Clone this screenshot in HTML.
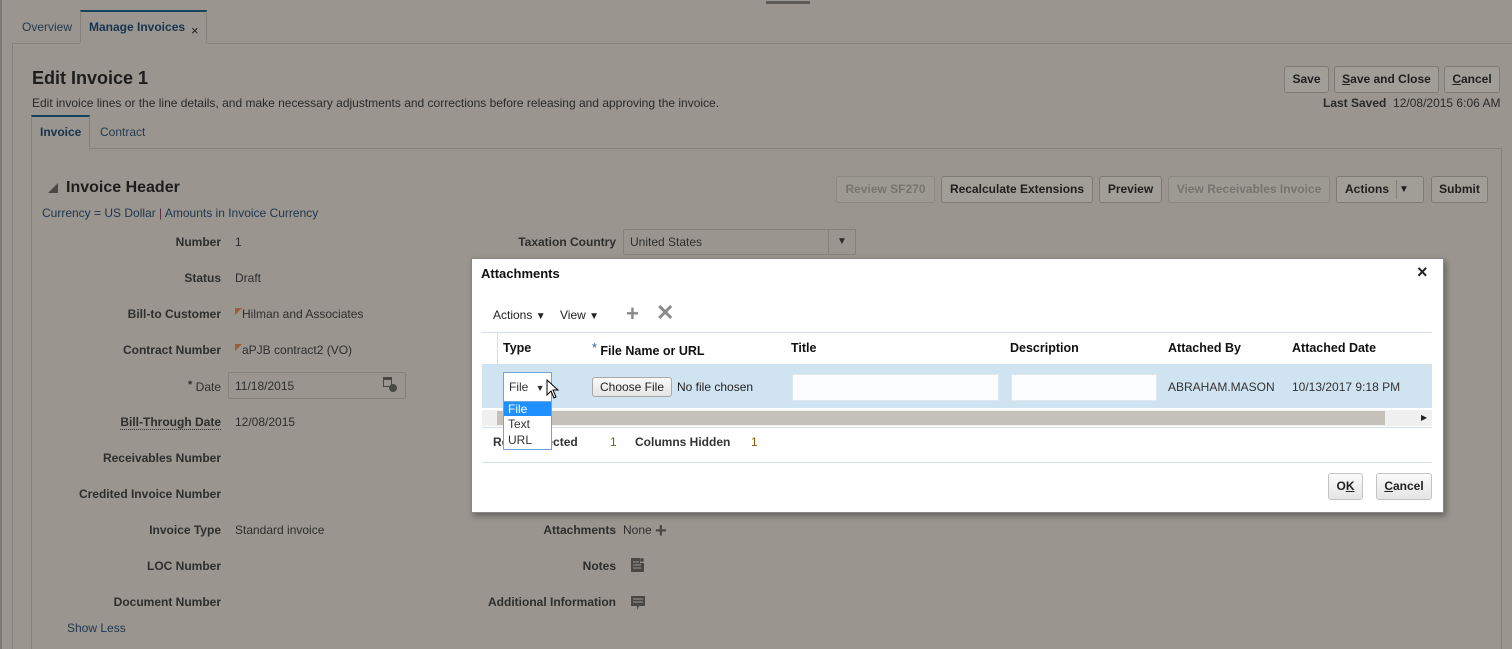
<!DOCTYPE html>
<html style="overflow:hidden;height:649px"><head><meta charset="utf-8"><style>
*{box-sizing:border-box;margin:0;padding:0}
body{width:1512px;height:649px;overflow:hidden;background:#9a968f;font-family:"Liberation Sans",Arial,sans-serif;font-size:12px;color:#2a2a2a;position:relative}
.a{position:absolute;white-space:nowrap}
.lbl{position:absolute;text-align:right;font-weight:bold;color:#2e2e2e;font-size:12px;white-space:nowrap}
.val{position:absolute;color:#2e2e2e;font-size:12px;white-space:nowrap}
.btn{position:absolute;height:27px;border:1px solid #7e7b75;border-radius:3px;background:#a19e97;font-weight:bold;font-size:12px;color:#1f1f1f;text-align:center;line-height:25px}
.dis{color:#77746e;border-color:#8c8983;background:#9d9a93}
.th{position:absolute;top:341px;font-weight:bold;font-size:12.5px;color:#111}
.wb{position:absolute;height:27px;border:1px solid #c4c4c4;border-radius:3px;background:linear-gradient(#fafafa,#e4e4e4);font-size:12px;color:#222;text-align:center;line-height:25px}
</style></head><body>
<div class="a" style="left:766px;top:1px;width:44px;height:3px;background:#5e5c58"></div>
<div class="a" style="left:0;top:0;width:2px;height:649px;background:#7d7b78"></div>
<div class="a" style="left:22px;top:20px;color:#243a52">Overview</div>
<div class="a" style="left:80px;top:10px;width:127px;height:34px;border:1px solid #85827c;border-bottom:none;border-top:2px solid #15425f;background:#9a968f"></div>
<div class="a" style="left:89px;top:20px;font-weight:bold;color:#17344f">Manage Invoices</div>
<div class="a" style="left:191px;top:23px;font-size:13px;color:#222">×</div>
<div class="a" style="left:12px;top:43px;width:1500px;height:606px;border:1px solid #85827c;border-right:none;border-bottom:none"></div>
<div class="a" style="left:80px;top:43px;width:127px;height:2px;background:#9a968f"></div>
<div class="a" style="left:32px;top:68px;font-size:18px;font-weight:bold;color:#1d1d1d">Edit Invoice 1</div>
<div class="a" style="left:32px;top:96px;color:#2a2a2a">Edit invoice lines or the line details, and make necessary adjustments and corrections before releasing and approving the invoice.</div>
<div class="btn" style="left:1284px;top:66px;width:45px">Save</div>
<div class="btn" style="left:1334px;top:66px;width:105px"><u>S</u>ave and Close</div>
<div class="btn" style="left:1444px;top:66px;width:56px"><u>C</u>ancel</div>
<div class="a" style="left:1323px;top:96px"><b>Last Saved</b>&nbsp; 12/08/2015 6:06 AM</div>
<div class="a" style="left:31px;top:148px;width:1471px;height:501px;border:1px solid #85827c;border-bottom:none"></div>
<div class="a" style="left:31px;top:115px;width:59px;height:35px;border:1px solid #85827c;border-bottom:none;border-top:2px solid #15425f;background:#9a968f"></div>
<div class="a" style="left:40px;top:125px;font-weight:bold;color:#17344f">Invoice</div>
<div class="a" style="left:100px;top:125px;color:#243a52">Contract</div>
<div class="a" style="left:48px;top:183px;width:0;height:0;border-left:10px solid transparent;border-bottom:10px solid #4a4844"></div>
<div class="a" style="left:66px;top:179px;font-size:16px;font-weight:bold;color:#1d1d1d">Invoice Header</div>
<div class="a" style="left:42px;top:206px;color:#1f3550">Currency = US Dollar <span style="color:#5a2850">|</span> Amounts in Invoice Currency</div>
<div class="btn dis" style="left:836px;top:176px;width:99px">Review SF270</div>
<div class="btn" style="left:941px;top:176px;width:152px">Recalculate Extensions</div>
<div class="btn" style="left:1099px;top:176px;width:63px">Preview</div>
<div class="btn dis" style="left:1168px;top:176px;width:162px">View Receivables Invoice</div>
<div class="btn" style="left:1336px;top:176px;width:88px;text-align:left;padding-left:8px">Actions<span style="position:absolute;left:59px;top:3px;height:19px;border-left:1px solid #85827c"></span><span style="position:absolute;left:62px;font-size:10px">▼</span></div>
<div class="btn" style="left:1431px;top:176px;width:57px">Submit</div>
<div class="lbl" style="right:1291px;top:235px">Number</div><div class="val" style="left:235px;top:235px">1</div>
<div class="lbl" style="right:1291px;top:271px">Status</div><div class="val" style="left:235px;top:271px">Draft</div>
<div class="lbl" style="right:1291px;top:307px">Bill-to Customer</div><div class="val" style="left:235px;top:307px"><span style="display:inline-block;width:0;height:0;border-top:7px solid #9a5e3e;border-right:7px solid transparent;vertical-align:top;margin-top:1px"></span>Hilman and Associates</div>
<div class="lbl" style="right:1291px;top:343px">Contract Number</div><div class="val" style="left:235px;top:343px"><span style="display:inline-block;width:0;height:0;border-top:7px solid #9a5e3e;border-right:7px solid transparent;vertical-align:top;margin-top:1px"></span>aPJB contract2 (VO)</div>
<div class="lbl" style="right:1291px;top:379px;font-weight:normal"><b style="vertical-align:3px;font-size:11px">*</b> Date</div>
<div class="a" style="left:228px;top:372px;width:178px;height:27px;border:1px solid #85827c;border-radius:2px"></div>
<div class="val" style="left:235px;top:379px">11/18/2015</div>
<div class="a" style="left:383px;top:377px;width:9px;height:10px;border:1.5px solid #4a4844;border-top-width:3px"></div><div class="a" style="left:389px;top:384px;width:8px;height:8px;border-radius:50%;background:#4a4844"></div>
<div class="lbl" style="right:1291px;top:415px;border-bottom:1px dotted #333">Bill-Through Date</div><div class="val" style="left:235px;top:415px">12/08/2015</div>
<div class="lbl" style="right:1291px;top:451px">Receivables Number</div>
<div class="lbl" style="right:1291px;top:487px">Credited Invoice Number</div>
<div class="lbl" style="right:1291px;top:523px">Invoice Type</div><div class="val" style="left:235px;top:523px">Standard invoice</div>
<div class="lbl" style="right:1291px;top:559px">LOC Number</div>
<div class="lbl" style="right:1291px;top:595px">Document Number</div>
<div class="a" style="left:67px;top:621px;color:#1f3550">Show Less</div>
<div class="lbl" style="right:896px;top:235px">Taxation Country</div>
<div class="a" style="left:623px;top:229px;width:233px;height:26px;border:1px solid #85827c;border-radius:2px"></div>
<div class="a" style="left:828px;top:229px;width:28px;height:26px;border:1px solid #85827c;text-align:center;line-height:24px;font-size:10px">▼</div>
<div class="val" style="left:630px;top:235px">United States</div>
<div class="lbl" style="right:896px;top:523px">Attachments</div><div class="val" style="left:623px;top:523px">None <b style="font-size:20px;color:#4a4844;vertical-align:-3px;line-height:10px">+</b></div>
<div class="lbl" style="right:896px;top:559px">Notes</div>
<svg class="a" style="left:630px;top:557px" width="16" height="16" viewBox="0 0 16 16"><path d="M1 1H10V6H14V15H1Z" fill="#4a4844"/><path d="M3 5H9M3 8H11M3 11H11" stroke="#9a968f" stroke-width="1"/><path d="M12 1L12 5M10 3H14M10.5 1.5L13.5 4.5M13.5 1.5L10.5 4.5" stroke="#4a4844" stroke-width="1"/></svg>
<div class="lbl" style="right:896px;top:595px">Additional Information</div>
<svg class="a" style="left:630px;top:595px" width="16" height="16" viewBox="0 0 16 16"><path d="M1 1H15V11H9L7 15V11H1Z" fill="#4a4844"/><path d="M3 4H13M3 7H13" stroke="#9a968f" stroke-width="1"/></svg>
<div class="a" style="left:471px;top:258px;width:973px;height:255px;background:#fff;border:1px solid #8a8884;box-shadow:2px 3px 6px rgba(0,0,0,.35)"></div>
<div class="a" style="left:481px;top:266px;font-size:13px;font-weight:bold;color:#111">Attachments</div>
<div class="a" style="left:1417px;top:262px;font-size:18px;font-weight:bold;color:#222">×</div>
<div class="a" style="left:493px;top:308px;color:#222">Actions <span style="font-size:10px">▼</span></div>
<div class="a" style="left:560px;top:308px;color:#222">View <span style="font-size:10px">▼</span></div>
<div class="a" style="left:626px;top:301px;font-size:22px;font-weight:bold;color:#8a8a8a">+</div>
<div class="a" style="left:656px;top:300px;font-size:22px;font-weight:bold;color:#8a8a8a">✕</div>
<div class="a" style="left:482px;top:332px;width:950px;height:1px;background:#d6dfe6"></div>
<div class="a" style="left:497px;top:333px;width:1px;height:32px;background:#d6dfe6"></div>
<div class="th" style="left:503px">Type</div>
<div class="th" style="left:592px"><span style="color:#2a5c8a;font-weight:normal;vertical-align:3px">*</span> File Name or URL</div>
<div class="th" style="left:791px">Title</div>
<div class="th" style="left:1010px">Description</div>
<div class="th" style="left:1168px">Attached By</div>
<div class="th" style="left:1292px">Attached Date</div>
<div class="a" style="left:482px;top:364px;width:950px;height:44px;background:#d0e3f1"></div>
<div class="a" style="left:503px;top:372px;width:49px;height:30px;border:1px solid #6fa5dc;background:#fff"></div>
<div class="a" style="left:509px;top:380px;color:#333">File <span style="font-size:9px;margin-left:4px">▼</span></div>
<div class="wb" style="left:592px;top:377px;width:80px;height:20px;line-height:18px;border-color:#a8a8a8">Choose File</div>
<div class="a" style="left:677px;top:380px;color:#222">No file chosen</div>
<div class="a" style="left:792px;top:374px;width:207px;height:27px;background:#fbfdff;border:1px solid #dfe8ef"></div>
<div class="a" style="left:1011px;top:374px;width:146px;height:27px;background:#fbfdff;border:1px solid #dfe8ef"></div>
<div class="a" style="left:1168px;top:380px;color:#333">ABRAHAM.MASON</div>
<div class="a" style="left:1292px;top:380px;color:#333">10/13/2017 9:18 PM</div>
<div class="a" style="left:482px;top:410px;width:950px;height:16px;background:#f0f0f0"></div>
<div class="a" style="left:497px;top:411px;width:888px;height:14px;background:#c4c1bb"></div>
<div class="a" style="left:1421px;top:413px;font-size:8px;color:#222">▶</div>
<div class="a" style="left:482px;top:427px;width:950px;height:1px;background:#d6dfe6"></div>
<div class="a" style="left:493px;top:435px;font-weight:bold;color:#333">Rows Selected</div>
<div class="a" style="left:610px;top:435px;color:#8a5a00">1</div>
<div class="a" style="left:635px;top:435px;font-weight:bold;color:#333">Columns Hidden</div>
<div class="a" style="left:751px;top:435px;color:#8a5a00">1</div>
<div class="a" style="left:482px;top:462px;width:950px;height:1px;background:#d6dfe6"></div>
<div class="wb" style="left:1328px;top:473px;width:35px;font-weight:bold">O<u>K</u></div>
<div class="wb" style="left:1376px;top:473px;width:56px;font-weight:bold"><u>C</u>ancel</div>
<div class="a" style="left:503px;top:401px;width:49px;height:49px;border:1px solid #6fa5dc;background:#fff"></div>
<div class="a" style="left:504px;top:402px;width:47px;height:14px;background:#1e90ff"></div>
<div class="a" style="left:508px;top:402px;color:#fff">File</div>
<div class="a" style="left:508px;top:417px;color:#333">Text</div>
<div class="a" style="left:508px;top:433px;color:#333">URL</div>
<svg class="a" style="left:546px;top:379px" width="14" height="22" viewBox="0 0 14 22"><path d="M1 1 L1 16 L5 12 L8 19 L10 18 L7 11 L12 11 Z" fill="#fff" stroke="#000" stroke-width="1"/></svg>
</body></html>
